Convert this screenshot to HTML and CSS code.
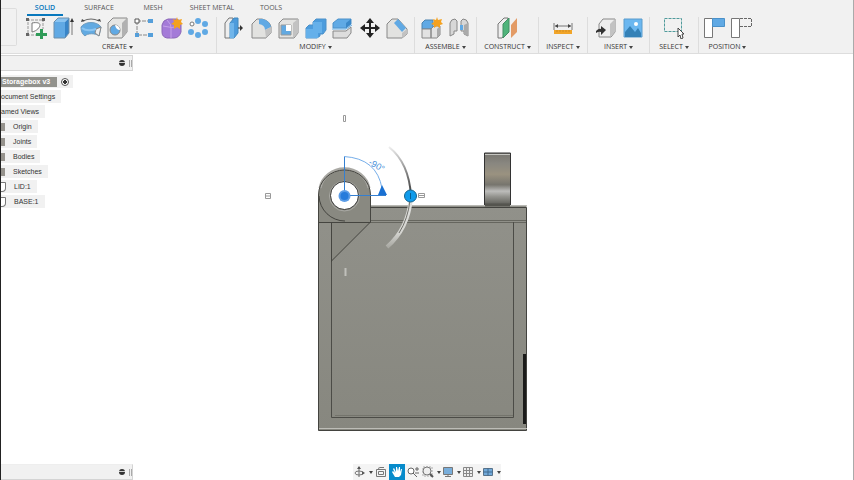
FILE: index.html
```html
<!DOCTYPE html>
<html lang="en">
<head>
<meta charset="utf-8">
<title>Storagebox v3</title>
<link rel="stylesheet" href="styles.css">
</head>
<body>
<header class="ribbon">
  <div class="workspace"></div>
  <div class="ribbon-main">
    <nav class="tabs">
      <a class="tab active" href="#solid">SOLID</a>
      <a class="tab" href="#surface">SURFACE</a>
      <a class="tab" href="#mesh">MESH</a>
      <a class="tab wide" href="#sheet">SHEET METAL</a>
      <a class="tab" href="#tools">TOOLS</a>
    </nav>
    <div class="groups">
      <section class="group">
        <div class="icons">
          <button aria-label="Create sketch"><svg viewBox="0 0 22 22"><path d="M1 3h17M2 1v18M1 18h11M17 2v10" fill="none" stroke="#999" stroke-dasharray="3 1"/><path d="M6 15V6c5-1 8 0 8 2s-3 6-8 7z" fill="#fff" stroke="#777"/><path d="M0 1h3v3H0zM16 1h3v3h-3zM0 16h3v3H0z" fill="#666"/><path d="M14 12h3v4h4v3h-4v3h-3v-3h-4v-3h4z" fill="#2f9b58"/></svg></button>
          <button aria-label="Extrude"><svg viewBox="0 0 22 22"><path d="M1 5l4-4h11l-4 4z" fill="#8ac4f1"/><path d="M1 5h11v16H1z" fill="#60a9e4"/><path d="M12 5l4-4v15l-4 5z" fill="#3885c8"/><path d="M1 21V5l4-4h11v15l-4 5z" fill="none" stroke="#6d8fab"/><path d="M19 18V4" stroke="#777"/><path d="M17 5l2-4 2 4z" fill="#333"/></svg></button>
          <button aria-label="Revolve"><svg viewBox="0 0 22 22"><path d="M1 10C5 4 17 4 21 10l-2 9c-3-3-12-3-14 0C2 17 1 14 1 10z" fill="#62aae2" stroke="#6d9cc0"/><path d="M16 12l5-2-2 9-4-3z" fill="#eee" stroke="#888"/><path d="M2 11q5 4 14 1" fill="none" stroke="#8cc5f1" stroke-width="2"/><path d="M3 4q8-4 16 0" fill="none" stroke="#666"/><path d="M1 5l1-3 3 2zM17 3l3-1 1 3z" fill="#444"/></svg></button>
          <button aria-label="Hole"><svg viewBox="0 0 22 22"><path d="M1 6l5-5h14v14l-5 6H1z" fill="#e6e6e4" stroke="#888"/><path d="M15 6l5-5v14l-5 6z" fill="#b1b1b1"/><circle cx="8" cy="13" r="5" fill="#60a9e4" stroke="#888"/><path d="M8 8a5 5 0 0 1 5 5q-4 0-5-5z" fill="#fff"/></svg></button>
          <button aria-label="Rectangular pattern"><svg viewBox="0 0 22 22"><path d="M3 4h14M3 4v14h14" fill="none" stroke="#888" stroke-dasharray="4 1"/><path d="M1 2h4v4H1z" fill="#fff" stroke="#555"/><path d="M14 2h5v4h-5zM14 16h5v4h-5zM1 16h4v4H1z" fill="#559fda"/></svg></button>
          <button aria-label="Create form"><svg viewBox="0 0 22 22"><path d="M1 8q1-5 6-6h8q5 1 5 6v7q-2 6-7 6H6q-5-1-5-6z" fill="#a47bd8" stroke="#8c68b8"/><path d="M2 9q9 3 17 0M10 10v11M6 3q5 5 4 8" fill="none" stroke="#c5a2e9"/><path d="M16 0l1 3 4-1-1 3 2 2-3 1v4l-3-2-3 2V8l-3-1 3-2-1-3 3 1z" fill="#f4a11f"/></svg></button>
          <button aria-label="Circular pattern"><svg viewBox="0 0 22 22"><g fill="#60a9e4"><circle cx="10" cy="4" r="3"/><circle cx="17" cy="7" r="3"/><circle cx="17" cy="15" r="3"/><circle cx="10" cy="18" r="3"/><circle cx="3" cy="15" r="3"/></g><circle cx="4" cy="7" r="2" fill="#fff" stroke="#777"/></svg></button>
        </div>
        <button class="label">CREATE<i></i></button>
      </section>
      <section class="group">
        <div class="icons">
          <button aria-label="Press pull"><svg viewBox="0 0 22 22"><path d="M1 6l4-5h4v15l-3 5H1z" fill="#eee" stroke="#777"/><path d="M6 6l4-5h4v15l-4 5H6z" fill="#4e9bdb" stroke="#4188bd"/><path d="M6 6h4v15H6z" fill="#70b5ea"/><path d="M14 11h4" stroke="#333"/><path d="M16 8l3 3-3 3z" fill="#333"/></svg></button>
          <button aria-label="Fillet"><svg viewBox="0 0 22 22"><path d="M1 7l5-5h5q8 2 9 8v6l-5 5H1z" fill="#e2e2e0" stroke="#888"/><path d="M8 2h4q7 2 8 8l-6 3q0-5-6-6z" fill="#60a9e4"/><path d="M14 13l6-3v6l-5 5z" fill="#c2c2c2"/></svg></button>
          <button aria-label="Shell"><svg viewBox="0 0 22 22"><path d="M1 6l4-4h15v14l-4 5H1z" fill="#e3e3e1" stroke="#888"/><path d="M15 6l5-4v14l-5 5z" fill="#c2c2c2"/><path d="M3 8h10v10H3z" fill="#62a9e1" stroke="#999"/><path d="M8 8h5v6H8z" fill="#fff"/></svg></button>
          <button aria-label="Combine"><svg viewBox="0 0 22 22"><path d="M8 5l3-3h10v11l-3 4h-3v2l-3 2H1V11l3-3h4z" fill="#4c9cdd" stroke="#4c91c9"/><path d="M8 5h9v11h-4v5H1v-9h7z" fill="#65b0ea"/></svg></button>
          <button aria-label="Split body"><svg viewBox="0 0 22 22"><path d="M1 6l5-4h13v5l-5 4H1z" fill="#60aae5" stroke="#4c91c9"/><path d="M14 6l5-4v5l-5 4z" fill="#3b88c8"/><path d="M0 12h14l6-4" fill="none" stroke="#64aee7" stroke-width="1"/><path d="M1 14h13l5-4v6l-4 5H1z" fill="#ddd" stroke="#888"/></svg></button>
          <button aria-label="Move"><svg viewBox="0 0 22 22"><path d="M11 4v14M4 11h14" stroke="#222" stroke-width="2"/><path d="M7 6l4-5 4 5zM7 16l4 5 4-5zM6 7l-5 4 5 4zM16 7l5 4-5 4z" fill="#222"/></svg></button>
          <button aria-label="Chamfer"><svg viewBox="0 0 22 22"><path d="M1 7l5-5h6l9 10v5l-5 4H1z" fill="#e2e2e0" stroke="#888"/><path d="M12 2l8 9-4 4-8-9z" fill="#60a9e4"/><path d="M16 16l5-4v5l-5 4z" fill="#c2c2c2"/></svg></button>
        </div>
        <button class="label">MODIFY<i></i></button>
      </section>
      <section class="group duo">
        <div class="icons">
          <button aria-label="New component"><svg viewBox="0 0 22 22"><path d="M1 6l3-3h8v9H1z" fill="#60a9e4" stroke="#4c83ae"/><path d="M1 12h9v9H1zM10 12l3-3h6v9l-3 3h-6z" fill="#e2e2e2" stroke="#888"/><path d="M16 12l3-3v9l-3 3z" fill="#aaa"/><path d="M16 0l1 3 4-1-1 3 2 2-3 1v3l-3-2-3 2V8l-3-1 3-2-1-3 3 1z" fill="#f4a11f"/></svg></button>
          <button aria-label="Joint"><svg viewBox="0 0 22 22"><path d="M2 19V6q1-4 5-4l2 2v10H6v3z" fill="#d7d7d7" stroke="#888"/><path d="M20 19V6q-1-4-5-4l-2 2v10h3v3z" fill="#d7d7d7" stroke="#888"/><path d="M16 8l4-2v13l-4-2z" fill="#aaa"/><path d="M12 8h3v5h-3z" fill="#60a9e4"/></svg></button>
        </div>
        <button class="label">ASSEMBLE<i></i></button>
      </section>
      <section class="group single">
        <div class="icons"><button aria-label="Offset plane"><svg viewBox="0 0 22 22"><path d="M1 7l6-6h4v13l-6 7H1z" fill="#eee" stroke="#777"/><path d="M6 7l6-6v14l-6 6z" fill="#4fb47b" stroke="#438f65"/><path d="M14 8l6-7v14l-6 6z" fill="#e39b65"/></svg></button></div>
        <button class="label">CONSTRUCT<i></i></button>
      </section>
      <section class="group narrow">
        <div class="icons"><button aria-label="Measure"><svg viewBox="0 0 22 22"><path d="M2 6v7M20 6v7M3 9h16" stroke="#777"/><path d="M3 9l3-2v4zM19 9l-3-2v4z" fill="#444"/><path d="M2 13h18v4H2z" fill="#f1a529"/><path d="M5 13v2M8 13v2M11 13v2M14 13v2M17 13v2" stroke="#d08c22"/></svg></button></div>
        <button class="label">INSPECT<i></i></button>
      </section>
      <section class="group duo">
        <div class="icons">
          <button aria-label="Insert derive"><svg viewBox="0 0 22 22"><path d="M5 7l4-5h12v13l-4 5H5z" fill="#eee" stroke="#888"/><path d="M16 7l5-5v13l-5 5z" fill="#c2c2c2"/><path d="M2 14q3-3 5-2V9l5 4-5 5v-3q-2-1-5 1z" fill="#333"/></svg></button>
          <button aria-label="Insert image"><svg viewBox="0 0 22 22"><path d="M3 2h18v18H3z" fill="#6bb7f0" stroke="#5b9ccc"/><path d="M4 15l5-6 5 6 3-4 3 5v4H4z" fill="#3481b7"/><circle cx="15" cy="7" r="2" fill="#fff"/></svg></button>
        </div>
        <button class="label">INSERT<i></i></button>
      </section>
      <section class="group narrow">
        <div class="icons"><button aria-label="Select"><svg viewBox="0 0 22 22"><path d="M1.500 1.500h17v13h-17z" fill="none" stroke="#4f9a9b" stroke-dasharray="3 1"/><path d="M15 11v9l2-2 1 4 2-1-1-4h2z" fill="#fff" stroke="#444"/></svg></button></div>
        <button class="label">SELECT<i></i></button>
      </section>
      <section class="group duo last">
        <div class="icons">
          <button aria-label="Capture position"><svg viewBox="0 0 22 22"><path d="M1.500 1.500h8v19h-8z" fill="#fff" stroke="#777"/><path d="M9.500 1.500h12v8h-12z" fill="#60a9e4" stroke="#4a91c9"/></svg></button>
          <button aria-label="Revert position"><svg viewBox="0 0 22 22"><path d="M1.500 1.500h8v19h-8z" fill="#fff" stroke="#777"/><path d="M10 1.500h11.500v8H10" fill="none" stroke="#666" stroke-dasharray="3 1"/></svg></button>
        </div>
        <button class="label">POSITION<i></i></button>
      </section>
    </div>
  </div>
</header>

<main class="workarea">
  <aside class="sidebar">
    <div class="panel-head"><button aria-label="Collapse browser"></button><span></span></div>
    <ul class="tree">
      <li class="root"><b>Storagebox v3</b><input type="radio" aria-label="Activate Storagebox v3" checked></li>
      <li class="clipped">Document Settings</li>
      <li class="clipped">Named Views</li>
      <li class="child">Origin</li>
      <li class="child">Joints</li>
      <li class="child">Bodies</li>
      <li class="child">Sketches</li>
      <li class="child part">LID:1</li>
      <li class="child part">BASE:1</li>
    </ul>
    <div class="panel-head comments"><button aria-label="Expand comments"></button><span></span></div>
  </aside>

  <section class="viewport">
    <svg class="model" viewBox="133 54 720 426" role="img" aria-label="Side view of storage box">
      <defs>
        <linearGradient id="latch" x2="0" y2="1"><stop offset="0" stop-color="#77756f"/><stop offset=".2" stop-color="#898780"/><stop offset=".4" stop-color="#9a9280"/><stop offset=".6" stop-color="#77756e"/><stop offset=".72" stop-color="#bdbdbb"/><stop offset=".82" stop-color="#94948f"/><stop offset="1" stop-color="#55554f"/></linearGradient>
        <linearGradient id="body" x2="0" y2="1"><stop offset="0" stop-color="#91918a"/><stop offset="1" stop-color="#87877f"/></linearGradient>
        <linearGradient id="arc" x2="0" y2="1"><stop offset="0" stop-color="#eee"/><stop offset=".5" stop-color="#888"/><stop offset="1" stop-color="#333"/></linearGradient>
        <linearGradient id="arc-low" x2="0" y2="1"><stop offset="0" stop-color="#e2e2e0"/><stop offset=".7" stop-color="#d5d5d1"/><stop offset="1" stop-color="#a9a9a3"/></linearGradient>
      </defs>
      <path d="M484.500 153h26v53h-26z" fill="url(#latch)" stroke="#333"/>
      <path d="M485 154.500h25" stroke="#c5c5c0"/>
      <path d="M318.500 205h208v225.500h-208z" fill="url(#body)"/>
      <path d="M370 205.500h156.500" stroke="#b8b8b3"/>
      <path d="M370 207.500h156.500v223h-208V196" fill="none" stroke="#43433f"/>
      <path d="M485 205h25" stroke="#55554f" stroke-width="3"/>
      <path d="M370 220.500h156M319 222.500h207" stroke="#66665f"/>
      <path d="M331.500 222v195.500h182V222" fill="none" stroke="#4c4c47"/>
      <path d="M335 415.500h178" stroke="#74746c"/>
      <path d="M319 428.500h208" stroke="#bdbdb7"/>
      <path d="M524.500 354v70" stroke="#1b1b1a" stroke-width="3"/>
      <path d="M318.500 222v-27a26 25 0 0 1 52 0v27l-39 39v-39z" fill="#898981"/>
      <path d="M320 188a25 24 0 0 1 49 0" fill="none" stroke="#aaa9a4" stroke-width="3"/>
      <path d="M318.500 222v-27a26 25 0 0 1 52 0v27l-39 39M319 196a26 26 0 0 0 26 25M318.500 222.500h52M331.500 222v40" fill="none" stroke="#454540"/>
      <circle cx="344.500" cy="196" r="15" fill="none" stroke="#a9a9a4"/>
      <circle cx="344.500" cy="195.500" r="14" fill="#fff" stroke="#383836"/>
      <path d="M389 147Q409 163 411 196" fill="none" stroke="url(#arc)" stroke-width="2"/>
      <path d="M411 198Q408 229 387 247" fill="none" stroke="url(#arc-low)" stroke-width="4"/>
      <path d="M410 200Q408 219 399 233" fill="none" stroke="#71716b"/>
      <path d="M344.500 196v-39M344 195.500h42" fill="none" stroke="#347fd1"/>
      <path d="M344 156.500q33 2 38 32" fill="none" stroke="#76aee9"/>
      <path d="M378 195l4-10 5 10z" fill="#1970d2"/>
      <circle cx="344.500" cy="196" r="6" fill="#5b9ce6"/><circle cx="344.500" cy="196" r="4" fill="#267bdb"/>
      <text class="angle" x="368" y="164" transform="rotate(30 368 164)">-90°</text>
      <circle cx="410.500" cy="196" r="6" fill="#109beb" stroke="#14648f"/>
      <path d="M410.500 193v6" stroke="#075f94"/>
      <g fill="#fff" stroke="#999"><path d="M265.500 193.500h5v5h-5zM265 196h6M343.500 115.500h2v6h-2zM418.500 193.500h6v4h-6zM418 195.500h7"/></g>
      <path d="M345.500 268v8" stroke="#c0c0bb" stroke-width="2"/>
    </svg>
  </section>
  <nav class="viewbar" aria-label="View controls">
    <button class="drop" aria-label="Orbit"><svg viewBox="0 0 12 12"><path d="M5 1v10" stroke="#666"/><ellipse cx="5" cy="7" rx="4" ry="2" fill="none" stroke="#777"/><path d="M8 5l3 2-3 2zM3 3l2-3 2 3z" fill="#555"/></svg><i></i></button>
    <button aria-label="Look at"><svg viewBox="0 0 12 12"><path d="M1.500 3.500h9v7h-9zM3.500 5.500h5v3h-5zM3 2.500l2-1h4" fill="none" stroke="#777"/></svg></button>
    <button class="on" aria-label="Pan"><svg viewBox="0 0 12 12"><path d="M4 11L1 6l1-1 2 2-2-4 1-1 2 4V1h1l1 4 1-4h1v5l1-3h1l-1 6-2 2z" fill="#fff"/></svg></button>
    <button aria-label="Zoom"><svg viewBox="0 0 12 12"><circle cx="4" cy="5" r="3" fill="#fff" stroke="#666"/><path d="M6 7l4 4M8 3h4M10 1v4M8 7h4" stroke="#666"/></svg></button>
    <button class="drop" aria-label="Fit"><svg viewBox="0 0 12 12"><path d="M1 1h9v9H1z" fill="none" stroke="#aaa" stroke-dasharray="2 1"/><circle cx="5" cy="5" r="4" fill="#eee" stroke="#777"/><path d="M8 8l3 3" stroke="#555" stroke-width="2"/></svg><i></i></button>
    <button class="drop" aria-label="Display settings"><svg viewBox="0 0 12 12"><path d="M1.500 1.500h9v7h-9z" fill="#79aedb" stroke="#777"/><path d="M6 9v2M3 10.500h6" stroke="#777"/></svg><i></i></button>
    <button class="drop" aria-label="Grid"><svg viewBox="0 0 12 12"><path d="M1.500 1.500h9v9h-9zM4.500 1v10M7.500 1v10M1 4.500h10M1 7.500h10" fill="#eee" stroke="#888"/></svg><i></i></button>
    <button class="drop" aria-label="Viewports"><svg viewBox="0 0 12 12"><path d="M1.500 2.500h9v7h-9z" fill="#71a9da" stroke="#59738a"/><path d="M6 2v8M1 6h10" stroke="#406b8f"/></svg><i></i></button>
  </nav>
</main>
</body>
</html>
```
FILE: styles.css
```css
* { box-sizing: border-box; }
body {
  margin: 0;
  min-height: 100vh;
  display: flex;
  flex-direction: column;
  background: #fff;
  border-left: 1px solid #222;
  border-right: 1px solid #aaa;
  font: 7px/10px "Liberation Sans", Arial, sans-serif;
  color: #333;
}
button {
  padding: 0;
  border: 0;
  background: none;
  font: inherit;
  color: inherit;
}
svg { display: block; }
i {
  display: inline-block;
  border: 2px solid transparent;
  border-top: 3px solid #444;
  border-bottom: 0;
}

.ribbon {
  display: flex;
  background: #f1f1f1;
  border-bottom: 1px solid #ddd;
  font-family: "Open Sans", "Noto Sans", sans-serif;
}
.workspace {
  width: 16px;
  margin: 8px 2px 7px 0;
  border: 1px solid #ddd;
  border-left: 0;
  border-radius: 0 2px 2px 0;
}
.ribbon-main { flex: 1; }
.tabs {
  display: flex;
  height: 17px;
  padding: 3px 0 1px 8px;
  gap: 18px;
}
.tab {
  width: 36px;
  color: #555;
  text-align: center;
  text-decoration: none;
  white-space: nowrap;
}
.wide { width: 46px; }
.active {
  color: #0878bd;
  font-weight: 600;
  border-bottom: 2px solid #0878bd;
}
.group {
  width: 198px;
  padding: 0 5px;
  border-right: 1px solid #ddd;
}
.groups { display: flex; }
.duo { width: 62px; }
.single { width: 62px; }
.narrow { width: 49px; }
.last { width: 57px; border: 0; }
.icons { display: flex; justify-content: center; gap: 5px; }
.icons svg { width: 22px; height: 22px; }
.label {
  display: flex;
  align-items: center;
  justify-content: center;
  gap: 2px;
  width: 100%;
  height: 12px;
  margin-top: 2px;
  line-height: 12px;
}

.workarea {
  flex: 1;
  position: relative;
  display: grid;
  grid-template-columns: 132px 1fr;
}
.sidebar {
  display: flex;
  flex-direction: column;
  min-width: 0;
  overflow: hidden;
}
.panel-head {
  display: flex;
  align-items: center;
  justify-content: flex-end;
  gap: 4px;
  height: 16px;
  margin-top: 1px;
  background: #f1f1f1;
  border: 1px solid #d4d4d4;
  border-left: 0;
}
.panel-head button {
  width: 6px;
  height: 6px;
  border-radius: 50%;
  background: linear-gradient(#333 2px, #ccc 2px, #ccc 3px, #333 3px);
}
.panel-head span {
  width: 3px;
  height: 7px;
  border: 1px solid #aaa;
  border-width: 0 1px;
}
.comments { margin-top: auto; border-top-color: #eee; }
.tree {
  display: flex;
  flex-direction: column;
  align-items: flex-start;
  gap: 2px;
  margin: 4px 0 0;
  padding: 0;
  list-style: none;
}
.tree li {
  height: 13px;
  padding-right: 6px;
  background: #f1f1f1;
  line-height: 13px;
  white-space: nowrap;
}
.tree .root { display: flex; align-items: center; padding-right: 4px; }
.root b {
  height: 10px;
  padding: 0 7px 0 1px;
  background: #92928d;
  color: #fff;
  line-height: 10px;
}
.root input {
  appearance: none;
  width: 8px;
  height: 8px;
  margin: 0 0 0 4px;
  border: 1px solid #555;
  border-radius: 50%;
  background: radial-gradient(#333 2px, #fff 2px);
}
.clipped { margin-left: -5px; }
.tree .child { display: flex; align-items: center; gap: 8px; }
.child::before {
  content: "";
  width: 4px;
  height: 8px;
  background: #96938d;
}
.tree .part::before {
  background: #fff;
  border: 1px solid #777;
  border-left: 0;
  border-radius: 0 1px 4px 0;
}
.viewport { display: flex; min-width: 0; }
.model { width: 100%; height: auto; }
.angle { font: 9px "Liberation Sans", Arial, sans-serif; fill: #4a91d9; }

.viewbar {
  position: absolute;
  bottom: 0;
  left: 50%;
  transform: translateX(-50%);
  display: flex;
  height: 16px;
  background: #f4f4f4;
}
.viewbar button {
  display: flex;
  align-items: center;
  justify-content: center;
  gap: 3px;
  width: 16px;
}
.viewbar .drop { width: 20px; }
.viewbar .on { background: #078bcb; }
.viewbar svg { width: 12px; height: 12px; }
```
